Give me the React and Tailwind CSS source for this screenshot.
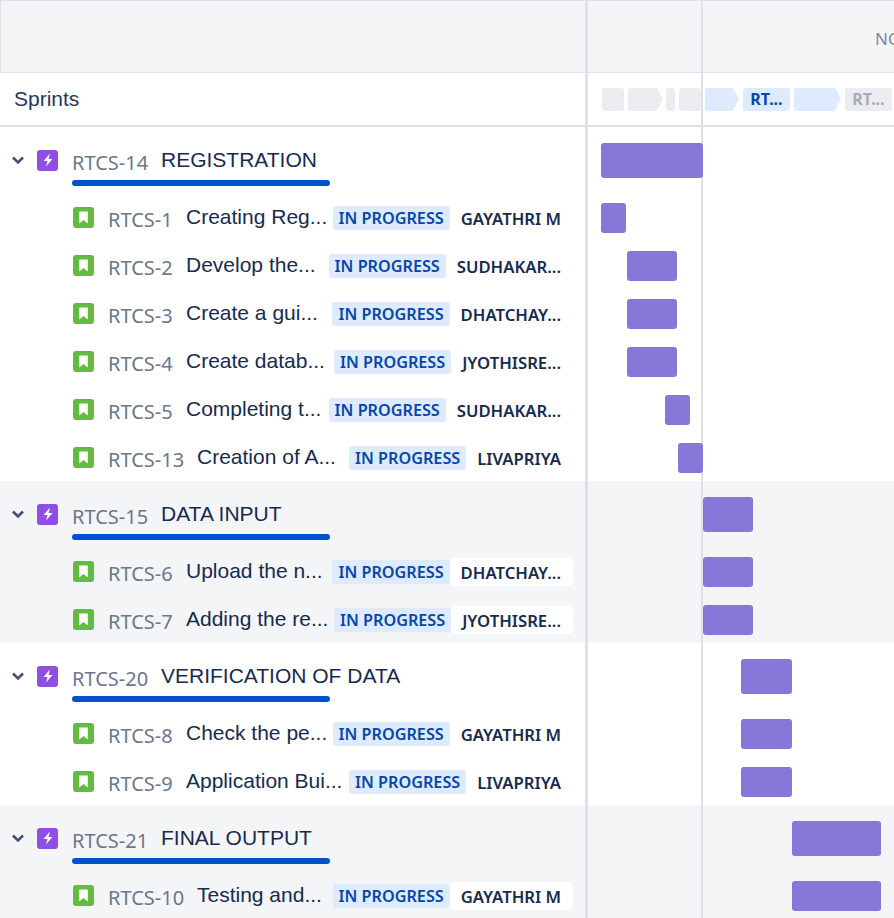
const Track = ({ children }) => (
  <div className="relative z-10 min-w-0 flex-1 border-l-[3px] border-[#dfe1e6]">{children}</div>
);

const Bar = ({ left, w, h, top }) => (
  <div
    className="rounded-[3px] bg-[#8777d9]"
    style={{ marginLeft: left, width: w, height: h, marginTop: top }}
  />
);

const Epic = ({ id, title, shade, left, w }) => (
  <div className={`flex h-[66px] ${shade ? "bg-[#f4f5f7]" : "bg-white"}`}>
    <div className="w-[585px] shrink-0 pl-[10px] pt-[3px]">
      <div className="flex h-[60px] items-center">
        <svg width="16" height="16" viewBox="0 0 16 16" className="mr-[11px] shrink-0">
          <path d="M3 5.500l5 5 5-5" fill="none" stroke="#42526e" strokeWidth="2.600" />
        </svg>
        <span className="flex h-[21px] w-[21px] shrink-0 items-center justify-center rounded-[3px] bg-[#904ee2]">
          <svg width="14" height="16" viewBox="0 0 14 16"><path d="M9 1.500L2.500 9h4L5 14.500 11.500 7h-4z" fill="#fff" /></svg>
        </span>
        <span className="ml-[14px] mt-[6px] w-[89px] font-['Noto_Sans'] text-[20px] text-[#6b778c]">{id}</span>
        <span className="font-['Liberation_Sans'] text-[21px] text-[#172b4d]">{title}</span>
      </div>
      <div className="ml-[62px] mt-[-10px] h-[6px] w-[258px] rounded-[3px] bg-[#0052cc]" />
    </div>
    <Track><Bar left={left} w={w} h={35} top={16} /></Track>
  </div>
);

const Story = ({ id, title, assignee, shade, left, w, wide, pill }) => (
  <div className={`flex h-[48px] ${shade ? "bg-[#f4f5f7]" : "bg-white"}`}>
    <div className="flex w-[585px] shrink-0 items-center pl-[73px]">
      <span className="flex h-[21px] w-[21px] shrink-0 items-center justify-center rounded-[3px] bg-[#65ba43]">
        <svg width="11" height="13" viewBox="0 0 11 13"><path d="M1.200 0.500h8.600v12L5.500 9l-4.300 3.500z" fill="#fff" /></svg>
      </span>
      <span className={`ml-[14px] mt-[6px] shrink-0 font-['Noto_Sans'] text-[20px] text-[#6b778c] ${wide ? "w-[89px]" : "w-[78px]"}`}>{id}</span>
      <span className="min-w-0 flex-1 whitespace-nowrap font-['Liberation_Sans'] text-[21px] text-[#172b4d]">{title}</span>
      <span className="mt-[1px] flex h-[24px] shrink-0 items-center rounded-[3px] bg-[#deebff] px-[6px] pt-[2px] font-['Noto_Sans'] text-[16.200px] font-semibold text-[#0747a6]">IN PROGRESS</span>
      <span className={`mr-[12px] mt-[1px] flex h-[28px] shrink-0 items-center rounded-[5px] pl-[11px] pr-[12px] pt-[3px] font-['Noto_Sans'] text-[16.700px] font-semibold text-[#172b4d] ${pill ? "bg-white" : ""}`}>{assignee}</span>
    </div>
    <Track><Bar left={left} w={w} h={30} top={10} /></Track>
  </div>
);

const Chip = ({ w, blue, arrow, label }) => (
  <div className="flex h-[23px] shrink-0">
    <div
      className={`flex h-[23px] items-center justify-center ${arrow ? "rounded-l-[3px]" : "rounded-[3px]"} font-['Noto_Sans'] text-[16px] font-bold ${blue ? "bg-[#deebff] text-[#0747a6]" : "bg-[#ebecf0] text-[#a5adba]"}`}
      style={{ width: w }}
    >{label}</div>
    {arrow && <div className={`h-[23px] w-[6px] [clip-path:polygon(0_0,100%_50%,0_100%)] ${blue ? "bg-[#deebff]" : "bg-[#ebecf0]"}`} />}
  </div>
);

export default function App() {
  return (
    <div className="relative h-[918px] w-[894px] overflow-hidden bg-white">
      <div className="flex h-[73px] border-y border-[#dfe1e6] bg-[#f4f5f7]">
        <div className="w-[585px] shrink-0 border-l border-[#dfe1e6]" />
        <div className="min-w-0 flex-1 overflow-hidden whitespace-nowrap border-l-[3px] border-[#dfe1e6] pl-[287px] pt-[25px] font-['Noto_Sans'] text-[17px] text-[#7a869a]">NOV</div>
      </div>
      <div className="flex h-[54px] border-b-2 border-[#dfe1e6]">
        <div className="flex w-[585px] shrink-0 items-center pl-[14px] font-['Liberation_Sans'] text-[21px] text-[#253858]">Sprints</div>
        <div className="flex min-w-0 flex-1 items-center gap-[4px] overflow-hidden border-l-[3px] border-[#dfe1e6] pl-[14px]">
          <Chip w={22} />
          <Chip w={29} arrow />
          <div className="-ml-[1px]"><Chip w={9} /></div>
          <Chip w={22} />
          <Chip w={28} blue arrow />
          <Chip w={47} blue label="RT..." />
          <Chip w={41} blue arrow />
          <Chip w={47} label="RT..." />
        </div>
      </div>
      <Epic id="RTCS-14" title="REGISTRATION" left={13} w={102} />
      <Story id="RTCS-1" title="Creating Reg..." assignee="GAYATHRI M" left={13} w={25} />
      <Story id="RTCS-2" title="Develop the..." assignee="SUDHAKAR..." left={39} w={50} />
      <Story id="RTCS-3" title="Create a gui..." assignee="DHATCHAY..." left={39} w={50} />
      <Story id="RTCS-4" title="Create datab..." assignee="JYOTHISRE..." left={39} w={50} />
      <Story id="RTCS-5" title="Completing t..." assignee="SUDHAKAR..." left={77} w={25} />
      <Story id="RTCS-13" title="Creation of A..." assignee="LIVAPRIYA" wide left={90} w={25} />
      <Epic id="RTCS-15" title="DATA INPUT" shade left={115} w={50} />
      <Story id="RTCS-6" title="Upload the n..." assignee="DHATCHAY..." shade pill left={115} w={50} />
      <Story id="RTCS-7" title="Adding the re..." assignee="JYOTHISRE..." shade pill left={115} w={50} />
      <Epic id="RTCS-20" title="VERIFICATION OF DATA" left={153} w={51} />
      <Story id="RTCS-8" title="Check the pe..." assignee="GAYATHRI M" left={153} w={51} />
      <Story id="RTCS-9" title="Application Bui..." assignee="LIVAPRIYA" left={153} w={51} />
      <Epic id="RTCS-21" title="FINAL OUTPUT" shade left={204} w={89} />
      <Story id="RTCS-10" title="Testing and..." assignee="GAYATHRI M" shade pill wide left={204} w={89} />
      <div className="absolute bottom-0 left-[701px] top-0 w-[2px] bg-[#dfe1e6]" />
    </div>
  );
}
